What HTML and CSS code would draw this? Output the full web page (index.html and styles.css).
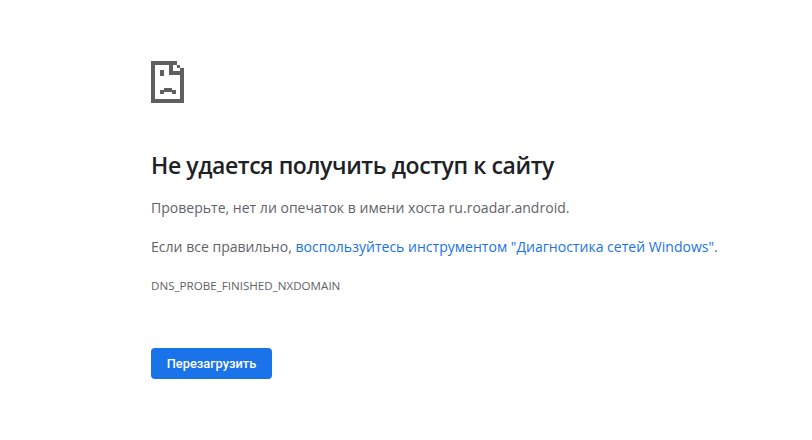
FILE: index.html
```html
<!DOCTYPE html>
<html lang="ru">
<head>
<meta charset="utf-8">
<title>ru.roadar.android</title>
<link rel="stylesheet" href="styles.css">
</head>
<body>
<main class="content">
  <svg class="icon" width="33" height="42" viewBox="0 0 33 42" aria-hidden="true">
    <path fill="#5f5f5f" d="M0 0H26V4H29V7H33V42H0ZM4 4V38H29V14H18V4ZM22 4V10H29V7H26V4ZM9 9H13V15H9ZM13 27H21V29H25V33H21V31H13V33H9V29H13Z" fill-rule="evenodd"/>
  </svg>
  <h1 class="title">Не удается получить доступ к сайту</h1>
  <p class="text">Проверьте, нет ли опечаток в имени хоста ru.roadar.android.</p>
  <p class="text">Если все правильно, <a class="link" href="#">воспользуйтесь инструментом "Диагностика сетей Windows"</a>.</p>
  <div class="code">DNS_PROBE_FINISHED_NXDOMAIN</div>
  <button class="reload" type="button">Перезагрузить</button>
</main>
</body>
</html>
```
FILE: styles.css
```css
* { box-sizing: border-box; }
html, body { margin: 0; height: 100%; background: #fff; }
body {
  font-family: "Open Sans", "Noto Sans", sans-serif;
  font-size: 14px;
  color: #5f6368;
  overflow: hidden;
}
.content {
  display: flex;
  flex-direction: column;
  align-items: flex-start;
  padding: 61px 0 0 151px;
}
.icon { display: block; flex: none; }
.title {
  margin: 45px 0 0;
  font-size: 23px;
  line-height: 34px;
  font-weight: 600;
  letter-spacing: -0.4px;
  color: #202124;
  white-space: nowrap;
}
.text {
  margin: 0 0 16px;
  line-height: 23px;
  letter-spacing: 0.02px;
  white-space: nowrap;
}
.title + .text { margin-top: 14px; }
.link { color: #1a73e8; text-decoration: none; }
.code {
  font-size: 11.6px;
  line-height: 16px;
  margin-top: 4px;
}
.reload {
  margin-top: 54px;
  width: 121px;
  height: 31px;
  padding: 0;
  border: 0;
  border-radius: 4px;
  background: #1a73e8;
  color: #fff;
  font-family: Roboto, sans-serif;
  font-size: 12.8px;
  font-weight: 500;
}
```
